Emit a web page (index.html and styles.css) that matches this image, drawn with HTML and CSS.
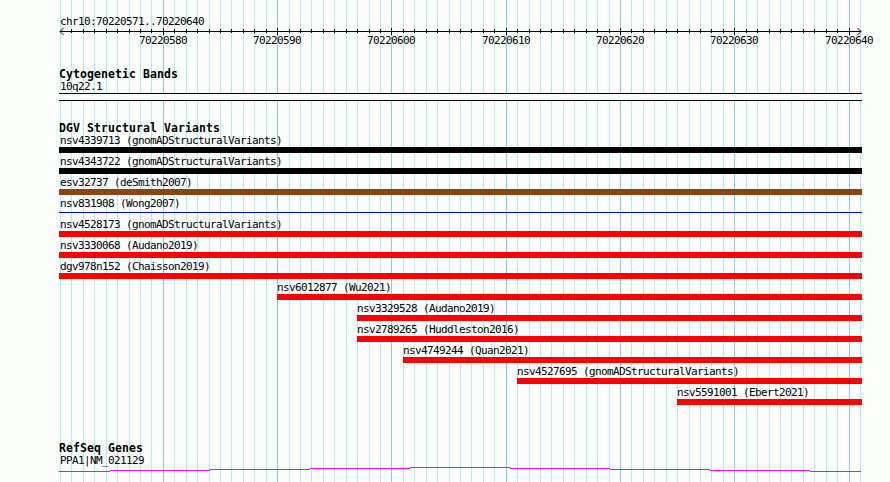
FILE: index.html
```html
<!DOCTYPE html>
<html lang="en">
<head>
    <meta charset="UTF-8">
    <title>chr10:70220571..70220640</title>
    <link rel="stylesheet" href="styles.css">
</head>
<body>
    <svg id="gridLines" class="grid-lines" width="890" height="482"></svg>

    <div class="tracks">
        <div class="ruler">
            <div class="label">chr10:70220571..70220640</div>
            <svg id="axis" class="axis" width="830" height="24"></svg>
        </div>

        <div class="track cytoband">
            <h2>Cytogenetic Bands</h2>
            <div class="label">10q22.1</div>
            <div class="band"></div>
        </div>

        <div class="track variants">
            <h2>DGV Structural Variants</h2>
            <div id="variantList"></div>
        </div>

        <div class="track genes">
            <h2>RefSeq Genes</h2>
            <div class="label">PPA1|NM_021129</div>
            <svg class="gene" width="802" height="6">
                <path d="M0 4.5H51M51 3.5H151M151 2.5H251M251 1.5H351M351 .5H451M451 1.5H551M551 2.5H651M651 3.5H751M751 4.5H802"/>
            </svg>
        </div>
    </div>

    <script src="tracks.js"></script>
</body>
</html>
```
FILE: styles.css
```css
body {
    margin: 0;
    width: 890px;
    height: 482px;
    overflow: hidden;
    position: relative;
    background-color: #fcfefc;
    color: #000;
    font-family: "DejaVu Sans Mono", monospace;
}

svg {
    display: block;
    shape-rendering: crispEdges;
}

.grid-lines {
    position: absolute;
    top: 0;
    left: 0;
}

.minor {
    fill: #aeeeee;
}

.major {
    fill: #87ceeb;
}

.tracks {
    position: relative;
    padding: 15px 28px 0 59px;
}

.label,
.axis text {
    font-size: 11px;
    letter-spacing: -0.622px;
}

.label {
    height: 13px;
    line-height: 13px;
    padding-left: 1px;
    white-space: pre;
}

.ruler {
    height: 53px;
}

.axis {
    overflow: visible;
}

.axis path {
    fill: none;
    stroke: #000;
}

.axis .arrow {
    shape-rendering: auto;
}

h2 {
    margin: 0;
    height: 12px;
    line-height: 13px;
    font-size: 11.5px;
    font-weight: bold;
    letter-spacing: 0.077px;
    white-space: pre;
}

.cytoband {
    height: 54px;
}

.band {
    height: 6px;
    border-top: 1px solid #000;
    border-bottom: 1px solid #000;
    background-color: #fcfefc;
}

.variants {
    height: 320px;
}

.variant {
    height: 21px;
}

.variant.inner .label {
    padding-left: 0;
}

.bar {
    height: 6px;
}

.gain .bar {
    background-color: #000;
}

.complex .bar {
    background-color: #8b4513;
}

.loss .bar {
    background-color: #f00;
}

.thin .bar {
    height: 1px;
    margin-top: 2px;
    background-color: #00f;
}

/* keeps the 1px bar's margin inside its row */
.thin {
    display: flow-root;
}

.gene path {
    fill: none;
    stroke: #f0f;
}
```
FILE: tracks.js
```javascript
const START = 70220571;
const BASES = 70;
const BASE_WIDTH = 800 / BASES;

const variants = [
    { name: 'nsv4339713 (gnomADStructuralVariants)', type: 'gain', offset: 0 },
    { name: 'nsv4343722 (gnomADStructuralVariants)', type: 'gain', offset: 0 },
    { name: 'esv32737 (deSmith2007)', type: 'complex', offset: 0 },
    { name: 'nsv831908 (Wong2007)', type: 'thin', offset: 0 },
    { name: 'nsv4528173 (gnomADStructuralVariants)', type: 'loss', offset: 0 },
    { name: 'nsv3330068 (Audano2019)', type: 'loss', offset: 0 },
    { name: 'dgv978n152 (Chaisson2019)', type: 'loss', offset: 0 },
    { name: 'nsv6012877 (Wu2021)', type: 'loss', offset: 19 },
    { name: 'nsv3329528 (Audano2019)', type: 'loss', offset: 26 },
    { name: 'nsv2789265 (Huddleston2016)', type: 'loss', offset: 26 },
    { name: 'nsv4749244 (Quan2021)', type: 'loss', offset: 30 },
    { name: 'nsv4527695 (gnomADStructuralVariants)', type: 'loss', offset: 40 },
    { name: 'nsv5591001 (Ebert2021)', type: 'loss', offset: 54 }
];

// grid lines and ruler ticks share the same positions
let minor = '';
let major = '';
let axis = '<rect x="1" y="3" width="801" height="1"/>';
axis += '<path class="arrow" d="M4.5 0L1 3.5L4.5 7M798.5 0L802 3.5L798.5 7"/>';
for (let i = 0; i <= BASES; i++) {
    const x = Math.round(i * BASE_WIDTH) + 1;
    const isMajor = (START + i) % 10 === 0;
    const line = `<rect class="${isMajor ? 'major' : 'minor'}" x="${x + 59}" y="0" width="1" height="482"/>`;
    if (isMajor) {
        major += line;
        axis += `<rect x="${x}" y="0" width="1" height="7"/>`;
        axis += `<text x="${x - 24}" y="16">${START + i}</text>`;
    } else {
        minor += line;
        if (i > 0 && i < BASES) {
            axis += `<rect x="${x}" y="1" width="1" height="4"/>`;
        }
    }
}
document.getElementById('gridLines').innerHTML = minor + major;
document.getElementById('axis').innerHTML = axis;

const list = document.getElementById('variantList');
variants.forEach(function (v) {
    const row = document.createElement('div');
    row.className = 'variant ' + v.type;
    // features in the middle of the region start right on their grid line
    if (v.offset > 0) {
        row.classList.add('inner');
        row.style.marginLeft = Math.round(v.offset * BASE_WIDTH) + 1 + 'px';
    }

    const label = document.createElement('div');
    label.className = 'label';
    label.textContent = v.name;

    const bar = document.createElement('div');
    bar.className = 'bar';

    row.appendChild(label);
    row.appendChild(bar);
    list.appendChild(row);
});
```
